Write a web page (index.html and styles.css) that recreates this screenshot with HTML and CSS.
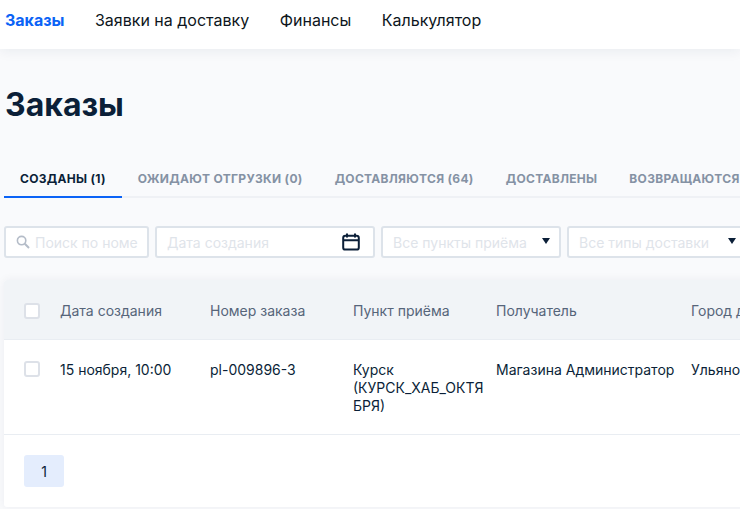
FILE: index.html
```html
<!DOCTYPE html>
<html lang="ru">
<head>
<meta charset="utf-8">
<title>Заказы</title>
<link rel="stylesheet" href="styles.css">
</head>
<body>
<nav class="nav">
  <a class="nav-link active">Заказы</a>
  <a class="nav-link">Заявки на доставку</a>
  <a class="nav-link">Финансы</a>
  <a class="nav-link">Калькулятор</a>
</nav>
<main class="page">
  <h1 class="title">Заказы</h1>
  <div class="tabs">
    <div class="tab active">Созданы (1)</div>
    <div class="tab">Ожидают отгрузки (0)</div>
    <div class="tab">Доставляются (64)</div>
    <div class="tab">Доставлены</div>
    <div class="tab">Возвращаются</div>
  </div>
  <div class="filters">
    <div class="field f-search">
      <svg class="search-ico" width="14" height="14" viewBox="0 0 14 14" fill="none" stroke="#b4bcc8" stroke-width="1.6"><circle cx="5.6" cy="5.6" r="4.2"/><path d="M8.8 8.8l4.2 4.2" stroke-width="2"/></svg>
      <span class="ph">Поиск по номе</span>
    </div>
    <div class="field f-date">
      <span class="ph">Дата создания</span>
      <svg class="cal" width="20" height="20" viewBox="0 0 20 20" fill="none" stroke="#0b1f38" stroke-width="2"><rect x="2.2" y="3.8" width="15.6" height="13.8" rx="2.2"/><path d="M2.2 8.2h15.6M6 1.4v4M14 1.4v4"/></svg>
    </div>
    <div class="field f-select"><span class="ph">Все пункты приёма</span><i class="caret"></i></div>
    <div class="field f-select"><span class="ph">Все типы доставки</span><i class="caret"></i></div>
  </div>
  <section class="card">
    <div class="row head">
      <div class="c c-check"><span class="check"></span></div>
      <div class="c c-date">Дата создания</div>
      <div class="c c-num">Номер заказа</div>
      <div class="c c-point">Пункт приёма</div>
      <div class="c c-rec">Получатель</div>
      <div class="c c-city">Город доставки</div>
    </div>
    <div class="row body">
      <div class="c c-check"><span class="check"></span></div>
      <div class="c c-date">15 ноября, 10:00</div>
      <div class="c c-num">pl-009896-3</div>
      <div class="c c-point">Курск (КУРСК_ХАБ_ОКТЯБРЯ)</div>
      <div class="c c-rec">Магазина Администратор</div>
      <div class="c c-city">Ульяновск</div>
    </div>
    <div class="pager"><span class="page-btn">1</span></div>
  </section>
</main>
</body>
</html>
```
FILE: styles.css
```css
* { box-sizing: border-box; }
html, body { margin: 0; height: 100%; overflow: hidden; }
body {
  background: #f9fafc;
  font-family: Inter, "Liberation Sans", sans-serif;
  color: #0b1f38;
  width: 740px;
  height: 509px;
}
.nav {
  height: 49px;
  background: #fff;
  display: flex;
  align-items: center;
  gap: 30.5px;
  padding: 0 0 10px 5px;
  font-size: 16px;
  line-height: 24px;
  box-shadow: 0 2px 12px rgba(20, 40, 70, 0.07);
  position: relative;
}
.nav-link { color: #0d1520; white-space: nowrap; }
.nav-link.active { color: #0b63f6; font-weight: 700; }
.page { padding: 0 0 0 4px; width: 1200px; }
.title {
  margin: 0;
  padding: 36px 0 0 1px;
  font-size: 32px;
  line-height: 40px;
  font-weight: 700;
  color: #0b1f38;
}
.tabs {
  margin-top: 36px;
  height: 37px;
  display: flex;
  border-bottom: 2px solid #eff1f5;
}
.tab {
  padding: 10px 16px 0;
  height: 37px;
  font-size: 12px;
  line-height: 16px;
  font-weight: 700;
  letter-spacing: 0.3px;
  text-transform: uppercase;
  color: #8592a4;
  white-space: nowrap;
}
.tab.active { color: #0b1f38; border-bottom: 2px solid #0b63f6; }
.filters { margin-top: 28px; display: flex; gap: 6px; }
.field {
  height: 32px;
  background: #fff;
  border: 2px solid #dde3ea;
  border-radius: 3px;
  display: flex;
  align-items: center;
  font-size: 14px;
  padding-left: 10px;
  flex: none;
}
.ph { color: #dfe4ea; white-space: nowrap; overflow: hidden; flex: 1; }
.f-search { width: 145px; padding-right: 8px; gap: 5px; }
.search-ico { flex: none; }
.f-date { width: 220px; padding-right: 12px; }
.f-select { width: 180px; padding-right: 9px; }
.cal { flex: none; }
.caret {
  flex: none;
  width: 0;
  height: 0;
  border-left: 4.5px solid transparent;
  border-right: 4.5px solid transparent;
  border-top: 6px solid #0b1f38;
  margin: -2px 0 0 8px;
}
.card {
  margin-top: 22px;
  width: 1000px;
  height: 227px;
  background: #fff;
  border-radius: 3px 0 0 3px;
  box-shadow: 0 0 10px rgba(20, 40, 70, 0.06);
}
.row { display: flex; font-size: 14px; line-height: 18px; }
.head {
  height: 60px;
  background: #f1f4f7;
  color: #56657a;
  align-items: center;
  border-bottom: 1px solid #e9edf2;
  border-radius: 3px 0 0 0;
  padding-top: 2px;
}
.body {
  height: 95px;
  border-bottom: 1px solid #e9edf2;
  padding-top: 21px;
  color: #0b1f38;
}
.c { flex: none; padding-right: 12px; }
.c-check { width: 56px; padding-left: 20px; padding-right: 0; }
.c-date { width: 150px; }
.c-num { width: 143px; }
.c-point { width: 143px; padding-right: 12px; overflow-wrap: anywhere; }
.c-rec { width: 195px; padding-right: 0; white-space: nowrap; }
.c-city { width: 200px; white-space: nowrap; }
.check {
  display: block;
  width: 16px;
  height: 16px;
  background: #fff;
  border: 2px solid #dde1e8;
  border-radius: 3px;
}
.pager { padding: 20px; }
.page-btn {
  display: flex;
  align-items: center;
  justify-content: center;
  width: 40px;
  height: 32px;
  background: #e4edfd;
  border-radius: 3px;
  font-size: 14px;
  color: #0b1f38;
}
```
